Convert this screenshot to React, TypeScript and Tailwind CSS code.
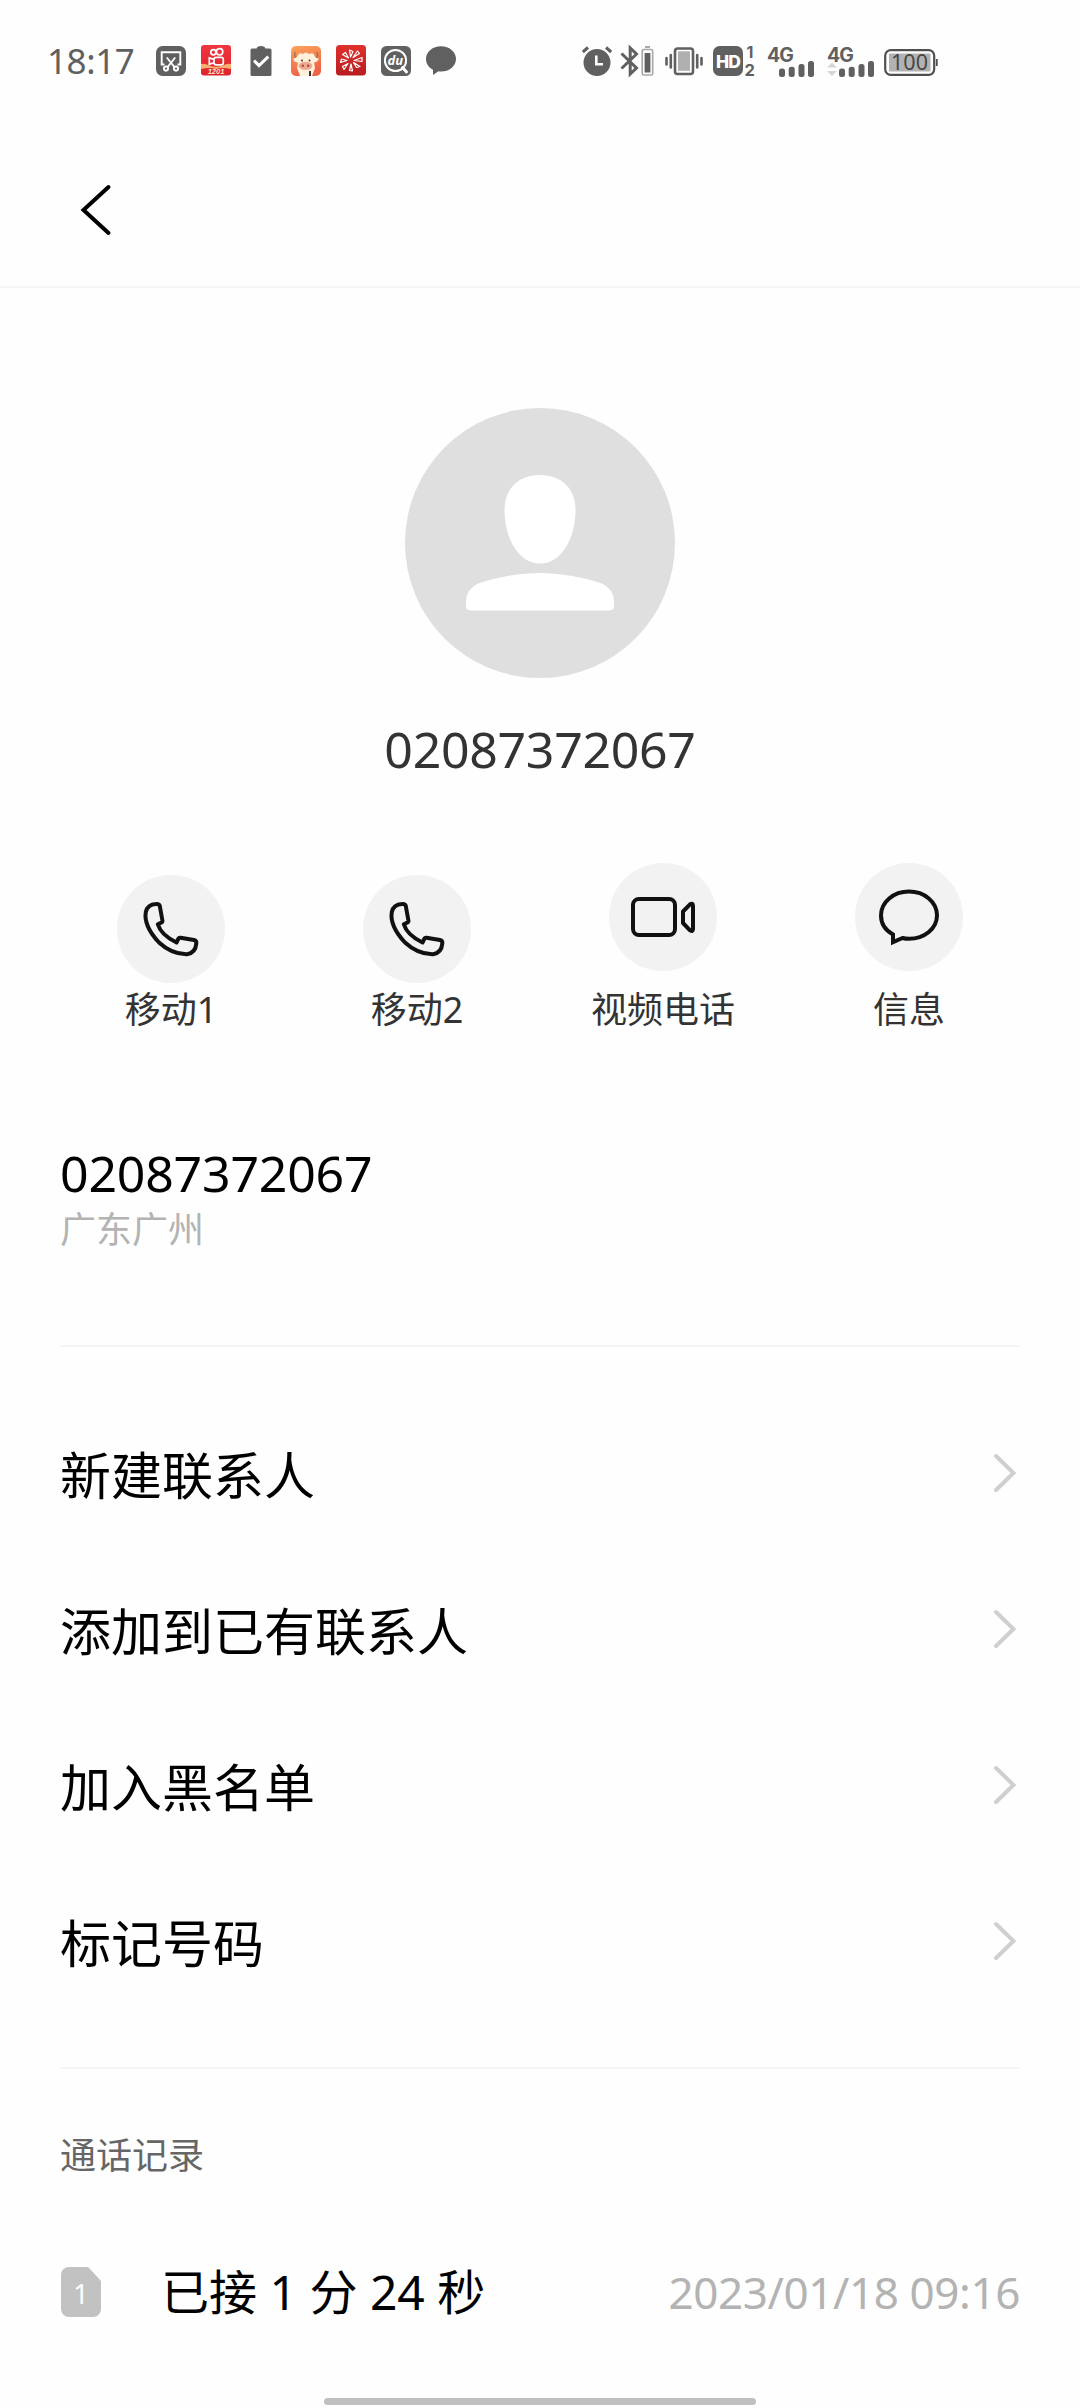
import React from "react";

const INK = "#606060";

type IconProps = { box: string; className: string; children: React.ReactNode };

function Glyph({ box, className, children }: IconProps) {
  return (
    <svg viewBox={box} className={`block shrink-0 overflow-visible ${className}`} fill="none">
      {children}
    </svg>
  );
}

function NotificationIcons() {
  return (
    <div className="flex items-center gap-[15px]">
      {/* screenshot */}
      <Glyph box="0 0 30 30" className="h-[30px] w-[30px]">
        <rect width="30" height="30" rx="6.5" fill={INK} />
        <g stroke="#fff" strokeWidth="1.9">
          <path d="M8.5 18.5H5.7V6.3H24.3V18.5H21.5" />
          <path d="M10.8 11.5L18.8 21.5M19.2 11.5L11.2 21.5" />
          <circle cx="10" cy="22.6" r="2.1" />
          <circle cx="20" cy="22.6" r="2.1" />
        </g>
      </Glyph>
      {/* short video */}
      <Glyph box="0 0 30 31" className="-mt-px h-[31px] w-[30px]">
        <defs>
          <linearGradient id="kv" x1="0" y1="0" x2="0" y2="1">
            <stop offset="0" stopColor="#f0363f" />
            <stop offset="1" stopColor="#dc222b" />
          </linearGradient>
        </defs>
        <rect width="30" height="30.5" rx="3" fill="url(#kv)" />
        <path d="M0 19Q4 18 8 20.500Q15 23 22 20.500Q26 18 30 19V24Q22 22 15 24Q8 22 0 24Z" fill="#f5b070" />
        <g stroke="#fff" strokeWidth="1.7">
          <circle cx="12.4" cy="7.2" r="2.6" />
          <circle cx="18.6" cy="6.8" r="3.2" />
          <rect x="13" y="12.3" width="9.3" height="7.6" rx="2.2" />
          <path d="M13 14.4L8.3 12.9V19.3L13 17.8" />
        </g>
        <text x="15" y="28.600" textAnchor="middle" fontSize="7.5" fontWeight="700" fontStyle="italic" fill="#ffe3c4" fontFamily="Liberation Sans, sans-serif">
          1201
        </text>
      </Glyph>
      {/* task clipboard */}
      <Glyph box="0 0 30 30" className="h-[30px] w-[30px]">
        <path d="M6 2.5H10.6Q11 0 15 0Q19 0 19.4 2.5H24Q25.5 2.5 25.5 4V28.5Q25.5 30 24 30H6Q4.5 30 4.5 28.5V4Q4.500 2.5 6 2.500Z" fill={INK} />
        <path d="M8 14.5L13 19.6L22.300 10.6" stroke="#fff" strokeWidth="3" />
      </Glyph>
      {/* cow game */}
      <Glyph box="0 0 30 30" className="h-[30px] w-[30px]">
        <defs>
          <linearGradient id="cow" x1="0" y1="0" x2="0.3" y2="1">
            <stop offset="0" stopColor="#fba45a" />
            <stop offset="1" stopColor="#ee6248" />
          </linearGradient>
        </defs>
        <rect width="30" height="30" rx="5" fill="url(#cow)" />
        <path d="M4 6Q2.5 13 8 12M26 6Q28.500 13 22 12" stroke="#a8754a" strokeWidth="1.600" />
        <path d="M6 11Q8 5.500 12 8Q15 5 18 8Q23 5.500 24 11L28 13Q25 17 23 16.500L24 22L21 30H9L6 22L7 16.500Q4 17 2 13Z" fill="#fff0dc" />
        <ellipse cx="14.500" cy="19.800" rx="7" ry="4" fill="#f0a890" />
        <circle cx="11" cy="14.500" r="1" fill="#5b3024" />
        <circle cx="18.500" cy="14.500" r="1" fill="#5b3024" />
        <circle cx="11.800" cy="19.800" r="1.200" fill="#a3483c" />
        <circle cx="17.200" cy="19.800" r="1.200" fill="#a3483c" />
        <path d="M19 25V30" stroke="#2c1b18" strokeWidth="1.800" />
      </Glyph>
      {/* red petals */}
      <Glyph box="0 0 30 31" className="-mt-px h-[31px] w-[30px]">
        <defs>
          <linearGradient id="petal" x1="0" y1="0" x2="0" y2="1">
            <stop offset="0" stopColor="#e0302e" />
            <stop offset="1" stopColor="#b81d1f" />
          </linearGradient>
        </defs>
        <rect width="30" height="30.5" rx="3.500" fill="url(#petal)" />
        <g stroke="#fff" strokeWidth="1.200" strokeLinejoin="round">
          <path d="M14.500 12L13.500 5L17 6.500Z" />
          <path d="M17 12.500L21.500 6L23.500 8.500Z" />
          <path d="M18 15.500L26 12.500V16.500Z" />
          <path d="M17.500 17.500L24 21.500L20.500 22.500Z" />
          <path d="M15 19L16.500 26L13.500 25.500Z" />
          <path d="M12 18.500L8 24.500L6.500 21.500Z" />
          <path d="M11 15.500L4.500 17.500L5.500 14Z" />
          <path d="M12.500 13L6.500 9.500L9.500 7.500Z" />
        </g>
      </Glyph>
      {/* search app */}
      <Glyph box="0 0 30 30" className="h-[30px] w-[30px]">
        <rect width="30" height="30" rx="5.500" fill={INK} />
        <circle cx="14.500" cy="14.500" r="10.600" stroke="#fff" strokeWidth="2" />
        <path d="M21.500 21.500L25.500 26" stroke="#fff" strokeWidth="3" strokeLinecap="round" />
        <text x="14.300" y="18.800" textAnchor="middle" fontSize="13" fontWeight="700" fontStyle="italic" fill="#fff" fontFamily="Open Sans, sans-serif">
          du
        </text>
      </Glyph>
      {/* message */}
      <Glyph box="0 0 30 30" className="h-[30px] w-[30px]">
        <path d="M15 0.300C23.300 0.300 30 5.800 30 12.900S23.300 25.500 15 25.500Q13.800 25.500 12.500 25.200L7 29V23.700C2.500 21.300 0 17.300 0 12.900C0 5.800 6.700 0.300 15 0.300Z" fill={INK} />
      </Glyph>
    </div>
  );
}

function Signal({ arrows }: { arrows?: boolean }) {
  return (
    <Glyph box="0 0 48 31" className="h-[31px] w-[48px]">
      <text x="0" y="15.500" fontSize="19.500" fill={INK} className="font-['Inter',sans-serif] font-bold tracking-[-1px]">
        4G
      </text>
      {arrows && <path d="M0 21.500L5 16.500L10 21.500ZM0 25L5 30L10 25Z" fill="#d6d6d6" />}
      <g fill={INK}>
        <rect x="12" y="22.500" width="6" height="8.500" rx="2.500" />
        <rect x="21.700" y="20.700" width="6" height="10.300" rx="2.500" />
        <rect x="31.500" y="18" width="6" height="13" rx="2.500" />
        <rect x="41" y="15" width="6" height="16" rx="2.500" />
      </g>
    </Glyph>
  );
}

function SystemIcons() {
  return (
    <div className="flex items-center">
      <Glyph box="0 0 30 30" className="h-[30px] w-[30px]">
        <circle cx="15" cy="16.500" r="13.500" fill={INK} />
        <path d="M0.800 6L6 1.500M29.200 6L24 1.500" stroke={INK} strokeWidth="3" />
        <path d="M14.300 9.500V18.300H21" stroke="#fff" strokeWidth="2.600" />
      </Glyph>
      <Glyph box="0 0 34 30" className="ml-[8px] h-[30px] w-[34px]">
        <path d="M1.500 7.500L16.500 22L10.200 28V2L16.500 8L1.500 22.500" stroke={INK} strokeWidth="3" />
        <rect x="22.200" y="3.500" width="10.500" height="25.500" rx="1.500" stroke="#a8a8a8" strokeWidth="1.600" />
        <path d="M25 1H30" stroke="#a8a8a8" strokeWidth="2" />
        <rect x="24.600" y="7" width="5.800" height="19.500" fill={INK} />
      </Glyph>
      <Glyph box="0 0 38 30" className="ml-[11px] h-[30px] w-[38px]">
        <rect x="10" y="2.500" width="18" height="25.500" rx="2.500" stroke={INK} strokeWidth="2.600" />
        <rect x="13" y="5.300" width="12" height="19.500" fill="#b0b0b0" />
        <path d="M1.500 12V18.500M5.800 9V21.500M32.200 9V21.500M36.500 12V18.500" stroke={INK} strokeWidth="2.600" strokeLinecap="round" />
      </Glyph>
      <Glyph box="0 0 43 30" className="ml-[10px] h-[30px] w-[43px]">
        <rect width="30" height="30" rx="6.500" fill={INK} />
        <text x="15" y="21.600" textAnchor="middle" fontSize="17.500" fill="#fff" className="font-['Inter',sans-serif] font-extrabold tracking-[-0.8px]">
          HD
        </text>
        <g fill={INK} className="font-['Inter',sans-serif] font-bold">
          <text x="33.500" y="12" fontSize="16">1</text>
          <text x="31.500" y="29.500" fontSize="16.500">2</text>
        </g>
      </Glyph>
      <div className="ml-[11px]">
        <Signal />
      </div>
      <div className="ml-[12px]">
        <Signal arrows />
      </div>
      <Glyph box="0 0 54 27" className="ml-[9px] mt-[3px] h-[27px] w-[54px]">
        <rect x="1.200" y="1.200" width="49" height="24.600" rx="5.500" stroke="#505050" strokeWidth="2.200" />
        <rect x="5" y="4.500" width="41.500" height="18" rx="1" fill="#b2b2b2" />
        <path d="M52.800 10V17" stroke="#505050" strokeWidth="1.800" />
        <text x="25.500" y="21.200" textAnchor="middle" fontSize="21.500" fill="#484848" className="font-['Noto_Sans',sans-serif]">
          100
        </text>
      </Glyph>
    </div>
  );
}

const PhoneIcon = () => (
  <Glyph box="0 0 54 54" className="h-[54px] w-[54px]">
    <path
      d="M1.800 10Q3.500 2.500 12 2Q15.200 1.600 15.800 4L18.500 19Q18.500 20 17.500 20.500L13.800 22.300Q17 33 32.500 40.500L34.500 36.500Q35 35.500 36.500 35.700L50 38Q52.700 38.600 52.300 41.500Q51.500 51 43 52.200Q28 52.500 15 40.500Q-0.500 24 1.800 10Z"
      stroke="#111"
      strokeWidth="4"
      strokeLinejoin="round"
    />
  </Glyph>
);

const VideoIcon = () => (
  <Glyph box="0 0 64 42" className="h-[42px] w-[64px]">
    <g stroke="#111" strokeWidth="4" strokeLinejoin="round">
      <rect x="2" y="3" width="42" height="36" rx="6" />
      <path d="M52 15.500L59 8.300Q62 6.500 62 10V33Q62 36 59 34.300L52 27Z" />
    </g>
  </Glyph>
);

const ChatIcon = () => (
  <Glyph box="0 0 60 56" className="h-[56px] w-[60px]">
    <path
      d="M30 2.500C45.500 2.500 58 13 58 26.300S45.500 49.800 30 49.800Q26.500 49.800 23.500 49L14 53.200V45.500C6.500 41.500 2 34.500 2 26.300C2 13 14.500 2.500 30 2.500Z"
      stroke="#111"
      strokeWidth="4"
    />
  </Glyph>
);

const actions = [
  { label: "移动1", Icon: PhoneIcon, raised: false },
  { label: "移动2", Icon: PhoneIcon, raised: false },
  { label: "视频电话", Icon: VideoIcon, raised: true },
  { label: "信息", Icon: ChatIcon, raised: true },
];

const menu = ["新建联系人", "添加到已有联系人", "加入黑名单", "标记号码"];

export default function App() {
  return (
    <div className="flex h-[2408px] w-[1080px] flex-col overflow-hidden bg-[#fefefe] font-['Noto_Sans','Noto_Sans_CJK_SC',sans-serif] text-black">
      <div className="flex h-[122px] shrink-0 items-center pl-[47px]">
        <span className="w-[109px] text-[35px] leading-[40px] tracking-[-0.4px] text-[#606060]">18:17</span>
        <NotificationIcons />
        <div className="ml-[126px]">
          <SystemIcons />
        </div>
      </div>

      <header className="flex h-[166px] shrink-0 items-start border-b-2 border-[#f7f7f7] pl-[80px] pt-[62px]">
        <Glyph box="0 0 32 52" className="h-[52px] w-[32px]">
          <path d="M28.500 3L3.500 26L28.500 49" stroke="#000" strokeWidth="4" strokeLinecap="round" />
        </Glyph>
      </header>

      <section className="flex h-[512px] shrink-0 flex-col items-center pt-[120px]">
        <Glyph box="0 0 270 270" className="h-[270px] w-[270px]">
          <circle cx="135" cy="135" r="135" fill="#dfdfdf" />
          <path d="M135 67C157 67 170.500 81 170.500 102C170.500 131 156 155.500 135 155.500S99.500 131 99.500 102C99.500 81 113 67 135 67Z" fill="#fff" />
          <path d="M135 165Q166 165 197 175.500Q209 182 209 193V198Q209 202.500 204 202.500H66Q61 202.500 61 198V193Q61 182 73 175.500Q104 165 135 165Z" fill="#fff" />
        </Glyph>
        <h1 className="mt-[41px] text-[50px] leading-[60px] tracking-[-0.3px] text-[#333]">02087372067</h1>
      </section>

      <section className="grid h-[334px] shrink-0 grid-cols-[repeat(4,246px)] pl-[48px] pt-[63px]">
        {actions.map(({ label, Icon, raised }) => (
          <div key={label} className="flex h-[172px] flex-col items-center">
            <div className={raised ? "flex size-[108px] items-center justify-center rounded-full bg-[#f2f2f2]" : "mt-[12px] flex size-[108px] items-center justify-center rounded-full bg-[#f2f2f2]"}>
              <Icon />
            </div>
            <span className="mt-auto text-[36px] leading-[50px] text-[#333]">{label}</span>
          </div>
        ))}
      </section>

      <main className="mx-[60px] flex flex-col">
        <section className="flex h-[213px] flex-col border-b-2 border-[#f5f5f5]">
          <span className="mt-[9px] text-[50px] leading-[60px] tracking-[-0.2px]">02087372067</span>
          <span className="mt-[2px] text-[36px] leading-[50px] text-[#b3b3b3]">广东广州</span>
        </section>

        <nav className="flex h-[722px] flex-col border-b-2 border-[#f5f5f5] pt-[50px]">
          {menu.map((item) => (
            <a key={item} className="flex h-[156px] items-center justify-between pr-[4px]">
              <span className="text-[51px] leading-[60px]">{item}</span>
              <Glyph box="0 0 22 38" className="-mt-[4px] h-[38px] w-[22px]">
                <path d="M2 2L19.500 19L2 36" stroke="#cfcfcf" strokeWidth="4" strokeLinecap="round" />
              </Glyph>
            </a>
          ))}
        </nav>

        <section className="flex flex-col">
          <h2 className="mt-[62px] text-[36px] leading-[50px] text-[#666]">通话记录</h2>
          <div className="mt-[81px] flex h-[60px] items-center">
            <div className="ml-px flex h-[50px] w-[40px] items-center justify-center rounded-[8px] bg-[#c2c2c2] pt-[3px] text-[27px] leading-none text-white [clip-path:polygon(0_0,68%_0,100%_28%,100%_100%,0_100%)]">
              1
            </div>
            <span className="ml-[60px] text-[48px] leading-[60px]">已接 1 分 24 秒</span>
            <span className="ml-auto text-[44px] leading-[60px] tracking-[-0.4px] text-[#b3b3b3]">2023/01/18 09:16</span>
          </div>
        </section>
      </main>

      <div className="mx-auto mb-[3px] mt-auto h-[7px] w-[432px] rounded-full bg-[#c0c0c0]" />
    </div>
  );
}
